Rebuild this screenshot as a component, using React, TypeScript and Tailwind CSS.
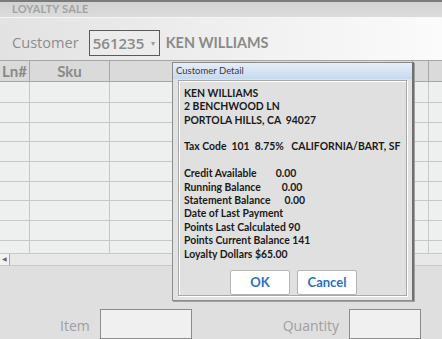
import React from 'react';

const rowHeights = [21, 20, 20, 20, 20, 20, 20, 21, 12];

const GridRow: React.FC<{ h: number; last?: boolean }> = ({ h, last }) => (
  <div
    className={`flex bg-[#eef0f0] ${last ? '' : 'border-b border-[#c6c8c8]'}`}
    style={{ height: h }}
  >
    <div className="w-[30px] border-r border-[#c6c8c8]" />
    <div className="w-[80px] border-r border-[#c6c8c8]" />
    <div className="w-[303px] border-r border-[#c6c8c8]" />
    <div className="w-[16px] border-r border-[#c6c8c8]" />
    <div className="flex-1" />
  </div>
);

const CustomerDetail: React.FC = () => (
  <div className="absolute left-[172px] top-[62px] w-[242px] h-[239px] bg-[#e2e2e2] border border-[#8c8c8c] border-r-2 border-r-[#6f6f6f] shadow-[1px_1px_0_#a0a0a0] flex flex-col">
    <div className="h-[16px] bg-gradient-to-b from-[#e6eef8] to-[#c6d9ee] flex items-center px-[3px] text-[9.5px] text-[#3a3a3a] font-['Lato',sans-serif]">
      Customer Detail
    </div>
    <div className="mx-[5px] mt-[1px] flex-1 mb-[4px] border border-[#a8a8a8] shadow-[inset_1px_1px_0_#ffffff,1px_1px_0_#ffffff] bg-[#e0e0e0] flex flex-col pl-[5px] pt-[6px] font-['Lato',sans-serif] text-[10.4px] font-bold text-[#1a1a1a] leading-[13.4px]">
      <div>KEN WILLIAMS</div>
      <div>2 BENCHWOOD LN</div>
      <div>PORTOLA HILLS, CA&nbsp; 94027</div>
      <div className="h-[13.4px]" />
      <div className="whitespace-pre">Tax Code  101  8.75%   CALIFORNIA/BART, SF</div>
      <div className="h-[13.4px]" />
      <div>
        Credit Available<span className="ml-[19px]">0.00</span>
      </div>
      <div>
        Running Balance<span className="ml-[21px]">0.00</span>
      </div>
      <div>
        Statement Balance<span className="ml-[14px]">0.00</span>
      </div>
      <div>Date of Last Payment</div>
      <div>Points Last Calculated 90</div>
      <div>Points Current Balance 141</div>
      <div>Loyalty Dollars $65.00</div>
      <div className="flex gap-[7px] mt-[9px] pl-[46px]">
        <button className="w-[60px] h-[25px] bg-white border border-[#b4b4b4] rounded-[2px] text-[13px] text-[#2b6fc2] font-bold">
          OK
        </button>
        <button className="w-[60px] h-[25px] bg-white border border-[#b4b4b4] rounded-[2px] text-[13px] text-[#2b6fc2] font-bold">
          Cancel
        </button>
      </div>
    </div>
  </div>
);

export default function App() {
  return (
    <div className="relative w-[442px] h-[339px] overflow-hidden bg-[#dfdfdf] font-['Open_Sans',sans-serif] flex flex-col">
      <div className="h-[2px] bg-[#7a7a7a]" />
      <div className="h-[16px] bg-gradient-to-b from-[#d2d2d2] to-[#dcdcdc] flex items-center pl-[12px] border-b border-[#f6f6f6]">
        <span className="text-[11px] font-bold text-[#a2a2a2] font-['Lato',sans-serif] tracking-[0.2px]">LOYALTY SALE</span>
      </div>
      <div className="h-[43px] bg-gradient-to-r from-[#e2e2e2] via-[#efefef] to-[#fbfbfb] flex items-center pl-[12px] pt-[8px]">
        <span className="text-[14.6px] text-[#8c8c8c]">Customer</span>
        <div className="ml-[10px] w-[71px] h-[26px] border border-[#5a5a5a] flex items-center pl-[3px] bg-[#ececec]">
          <span className="text-[15px] font-semibold text-[#8a8a8a]">561235</span>
          <span className="ml-auto mr-[4px] text-[8px] text-[#9a9a9a]">▾</span>
        </div>
        <span className="ml-[6px] text-[14.4px] font-bold text-[#8a8a8a] font-['Lato',sans-serif]">KEN WILLIAMS</span>
      </div>
      <div className="flex h-[22px] bg-[#dadada] border-y border-[#a6a6a6] font-['Lato',sans-serif] text-[15px] font-bold text-[#8a8a8a]">
        <div className="w-[30px] border-r border-[#a6a6a6] flex items-center justify-center">Ln#</div>
        <div className="w-[80px] border-r border-[#a6a6a6] flex items-center justify-center">Sku</div>
        <div className="w-[303px] border-r border-[#a6a6a6]" />
        <div className="w-[16px] border-r border-[#a6a6a6]" />
        <div className="flex-1" />
      </div>
      {rowHeights.map((h, i) => (
        <GridRow key={i} h={h} last={i === rowHeights.length - 1} />
      ))}
      <div className="h-[13px] bg-[#e8e8e8] border-y border-[#c8c8c8] flex">
        <div className="w-[10px] h-full border-r border-[#a8a8a8] bg-[#f2f2f2] flex items-center justify-center text-[6px] text-[#666]">◀</div>
      </div>
      <div className="flex-1 bg-[#dfdfdf] relative">
        <div className="flex items-start pt-[43px]">
          <span className="ml-[60px] mt-[6px] text-[14px] text-[#a0a0a0]">Item</span>
          <div className="ml-[10px] w-[92px] h-[30px] border border-[#8c8c8c] bg-[#f0f0f0]" />
          <span className="ml-[91px] mt-[6px] text-[14px] text-[#a0a0a0]">Quantity</span>
          <div className="ml-[10px] w-[72px] h-[30px] border border-[#8c8c8c] bg-[#f0f0f0]" />
        </div>
      </div>
      <CustomerDetail />
    </div>
  );
}
